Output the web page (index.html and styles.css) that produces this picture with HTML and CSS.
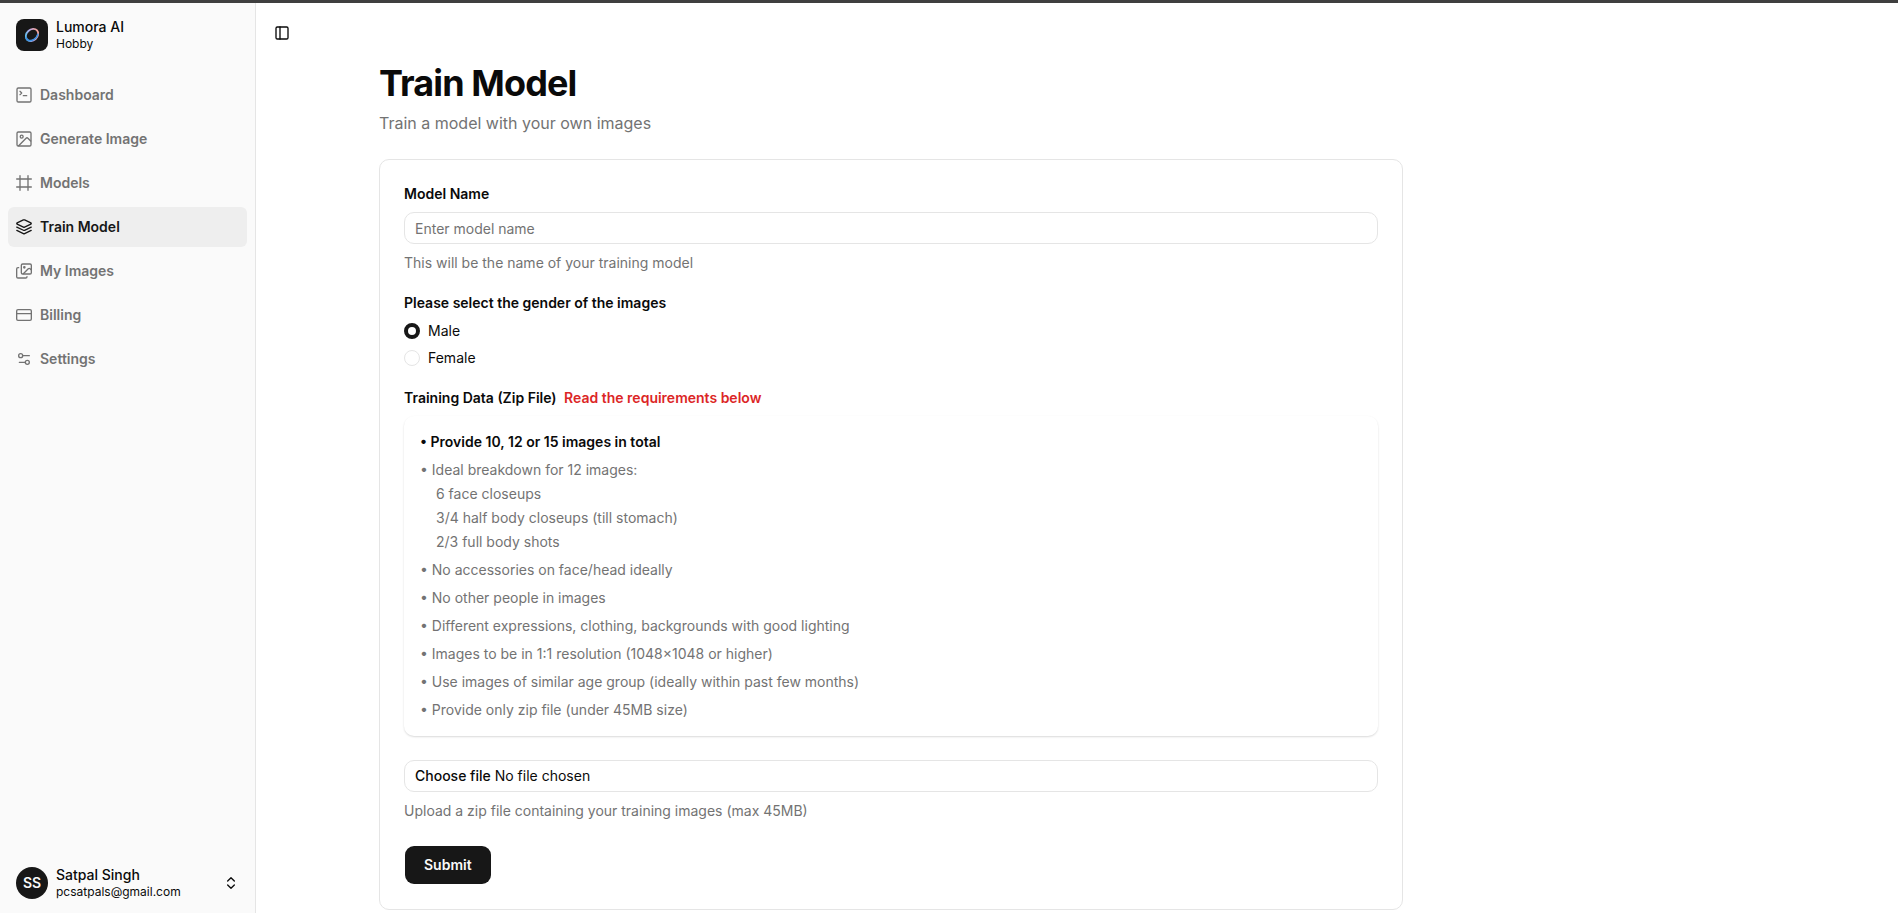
FILE: index.html
```html
<!DOCTYPE html>
<html lang="en">
<head>
    <meta charset="utf-8">
    <meta name="viewport" content="width=device-width, initial-scale=1">
    <title>Train Model - Lumora AI</title>
    <link rel="stylesheet" href="styles.css">
</head>
<body>
    <div class="layout">
        <aside class="sidebar">
            <div class="brand">
                <div class="brand-logo">
                    <svg width="16" height="16" viewBox="0 0 16 16" fill="none">
                        <defs>
                            <linearGradient id="ring" x1="2" y1="3" x2="14" y2="9" gradientUnits="userSpaceOnUse">
                                <stop offset="0" stop-color="#4fc3f0"/>
                                <stop offset="0.5" stop-color="#b9a8e8"/>
                                <stop offset="1" stop-color="#f2a39c"/>
                            </linearGradient>
                        </defs>
                        <ellipse cx="8" cy="8" rx="6.8" ry="5.4" transform="rotate(-42 8 8)" stroke="url(#ring)" stroke-width="1.8"/>
                        <path d="M2.200 10.500c.6 3.500 4.800 4 7.800 1.900 2-1.400 3.400-3.200 3.900-5.200" stroke="#3f8fe0" stroke-width="1.600" stroke-linecap="round"/>
                    </svg>
                </div>
                <div class="two-lines">
                    <span class="line-main">Lumora AI</span>
                    <span class="line-sub">Hobby</span>
                </div>
            </div>

            <nav class="menu">
                <a href="#" class="menu-item">
                    <svg class="icon" viewBox="0 0 24 24"><path d="m6 6.500 2.500 2.500L6 11.500"/><path d="M11 13h5"/><rect width="21" height="21" x="1.500" y="1.500" rx="2"/></svg>
                    <span>Dashboard</span>
                </a>
                <a href="#" class="menu-item">
                    <svg class="icon" viewBox="0 0 24 24"><rect width="21" height="21" x="1.500" y="1.500" rx="2"/><circle cx="8.500" cy="8.500" r="2.200"/><path d="m22 15-4.100-4.100a2 2 0 0 0-2.800 0L4 22"/></svg>
                    <span>Generate Image</span>
                </a>
                <a href="#" class="menu-item">
                    <svg class="icon" viewBox="0 0 24 24"><path d="M23 6H1"/><path d="M23 18H1"/><path d="M6 1v22"/><path d="M18 1v22"/></svg>
                    <span>Models</span>
                </a>
                <a href="#" class="menu-item active">
                    <svg class="icon" viewBox="0 0 24 24"><path d="M12.900 1.400a2.200 2.200 0 0 0-1.800 0L1.700 5.900a1 1 0 0 0 0 1.800l9.400 4.500a2.200 2.200 0 0 0 1.800 0l9.400-4.500a1 1 0 0 0 0-1.800z"/><path d="m1.200 12.200 9.900 4.700a2.200 2.200 0 0 0 1.800 0l9.900-4.700"/><path d="m1.200 17.200 9.900 4.700a2.200 2.200 0 0 0 1.800 0l9.900-4.700"/></svg>
                    <span>Train Model</span>
                </a>
                <a href="#" class="menu-item">
                    <svg class="icon" viewBox="0 0 24 24"><rect width="15" height="15" x="8" y="1.500" rx="2"/><circle cx="12.500" cy="6.500" r="1"/><path d="m22.500 10-1.300-1.300a2 2 0 0 0-2.800 0L11 16"/><path d="M4 7H3a2 2 0 0 0-2 2v11.500a2 2 0 0 0 2 2h11.500a2 2 0 0 0 2-2"/></svg>
                    <span>My Images</span>
                </a>
                <a href="#" class="menu-item">
                    <svg class="icon" viewBox="0 0 24 24"><rect width="22" height="16" x="1" y="4" rx="2"/><path d="M1 10h22"/></svg>
                    <span>Billing</span>
                </a>
                <a href="#" class="menu-item">
                    <svg class="icon" viewBox="0 0 24 24"><path d="M20 7h-9"/><path d="M14 17H5"/><circle cx="17" cy="17" r="3"/><circle cx="7" cy="7" r="3"/></svg>
                    <span>Settings</span>
                </a>
            </nav>

            <button type="button" class="user">
                <span class="avatar">SS</span>
                <span class="two-lines">
                    <span class="line-main">Satpal Singh</span>
                    <span class="line-sub">pcsatpals@gmail.com</span>
                </span>
                <svg class="icon" viewBox="0 0 24 24"><path d="m7 15 5 5 5-5"/><path d="m7 9 5-5 5 5"/></svg>
            </button>
        </aside>

        <main class="main">
            <header class="topbar">
                <button type="button" class="toggle" aria-label="Toggle Sidebar">
                    <svg class="icon" viewBox="0 0 24 24"><rect width="18" height="18" x="3" y="3" rx="2"/><path d="M9 3v18"/></svg>
                </button>
            </header>

            <div class="container">
                <h1>Train Model</h1>
                <p class="subtitle">Train a model with your own images</p>

                <form class="card">
                    <div class="field">
                        <label class="label" for="modelName">Model Name</label>
                        <input type="text" id="modelName" class="input" placeholder="Enter model name">
                        <p class="hint">This will be the name of your training model</p>
                    </div>

                    <fieldset class="field">
                        <legend class="label">Please select the gender of the images</legend>
                        <div class="radio-group">
                            <div class="radio-row">
                                <input type="radio" id="male" name="gender" value="male" checked>
                                <label for="male">Male</label>
                            </div>
                            <div class="radio-row">
                                <input type="radio" id="female" name="gender" value="female">
                                <label for="female">Female</label>
                            </div>
                        </div>
                    </fieldset>

                    <div class="field">
                        <label class="label" for="zipFile">Training Data (Zip File) <span class="warning">Read the requirements below</span></label>
                        <ul class="requirements">
                            <li class="strong">• Provide 10, 12 or 15 images in total</li>
                            <li>• Ideal breakdown for 12 images:
                                <ul>
                                    <li>6 face closeups</li>
                                    <li>3/4 half body closeups (till stomach)</li>
                                    <li>2/3 full body shots</li>
                                </ul>
                            </li>
                            <li>• No accessories on face/head ideally</li>
                            <li>• No other people in images</li>
                            <li>• Different expressions, clothing, backgrounds with good lighting</li>
                            <li>• Images to be in 1:1 resolution (1048×1048 or higher)</li>
                            <li>• Use images of similar age group (ideally within past few months)</li>
                            <li>• Provide only zip file (under 45MB size)</li>
                        </ul>
                        <div class="input file-box">
                            <span class="file-button">Choose file</span>
                            <span>No file chosen</span>
                            <input type="file" id="zipFile" accept=".zip">
                        </div>
                        <p class="hint">Upload a zip file containing your training images (max 45MB)</p>
                    </div>

                    <button type="submit" class="submit">Submit</button>
                </form>
            </div>
        </main>
    </div>
</body>
</html>
```
FILE: styles.css
```css
* {
    box-sizing: border-box;
}
body {
    margin: 0;
    border-top: 3px solid #3f3f3f;
    background: #fff;
    color: #0a0a0a;
    font-family: Inter, "Liberation Sans", sans-serif;
    font-size: 14px;
    line-height: 20px;
}
h1, p, ul {
    margin: 0;
    padding: 0;
}
ul {
    list-style: none;
}
button, input {
    font: inherit;
    color: inherit;
}
.layout {
    display: flex;
    min-height: calc(100vh - 3px);
}
.icon {
    width: 16px;
    height: 16px;
    flex-shrink: 0;
    fill: none;
    stroke: currentColor;
    stroke-width: 2;
    stroke-linecap: round;
    stroke-linejoin: round;
}

/* sidebar */
.sidebar {
    display: flex;
    flex-direction: column;
    width: 256px;
    flex-shrink: 0;
    padding: 8px 8px 6px;
    background: #fafafa;
    border-right: 1px solid #e5e5e5;
}
.brand,
.user {
    display: flex;
    align-items: center;
    gap: 8px;
    height: 48px;
    padding: 0 8px;
}
.user {
    margin-top: auto;
    border: none;
    background: none;
    text-align: left;
    cursor: pointer;
}
.brand-logo,
.avatar {
    display: flex;
    align-items: center;
    justify-content: center;
    width: 32px;
    height: 32px;
    background: #171717;
    color: #fafafa;
}
.brand-logo {
    border-radius: 8px;
}
.avatar {
    border-radius: 50%;
    font-weight: 600;
}
.two-lines {
    display: flex;
    flex-direction: column;
    flex: 1;
}
.line-main {
    line-height: 18px;
    font-weight: 500;
}
.line-sub {
    font-size: 12px;
    line-height: 16px;
}
.menu {
    display: flex;
    flex-direction: column;
    gap: 4px;
    padding-top: 16px;
}
.menu-item {
    display: flex;
    align-items: center;
    gap: 8px;
    height: 40px;
    padding: 0 8px;
    border-radius: 6px;
    color: #737373;
    font-weight: 600;
    text-decoration: none;
}
.menu-item:hover,
.menu-item.active {
    background: #eeeeee;
    color: #171717;
}

/* page */
.main {
    flex: 1;
    min-width: 0;
}
.topbar {
    display: flex;
    align-items: center;
    height: 60px;
    padding: 0 12px;
}
.toggle {
    display: flex;
    align-items: center;
    justify-content: center;
    width: 28px;
    height: 28px;
    padding: 0;
    border: none;
    background: none;
    cursor: pointer;
}
.container {
    max-width: 1396px;
    margin: 0 auto;
}
h1 {
    font-size: 36px;
    line-height: 40px;
    font-weight: 700;
    letter-spacing: -0.025em;
}
.subtitle {
    margin: 8px 0 24px;
    color: #737373;
    font-size: 16px;
    line-height: 24px;
}
.card {
    display: flex;
    flex-direction: column;
    gap: 20px;
    max-width: 1024px;
    padding: 24px;
    border: 1px solid #e5e5e5;
    border-radius: 10px;
}

/* form */
.field {
    min-width: 0;
    margin: 0;
    padding: 0;
    border: none;
}
.label {
    display: block;
    padding: 0;
    font-weight: 600;
}
.input {
    display: block;
    width: 100%;
    height: 32px;
    margin-top: 8px;
    padding: 0 10px;
    border: 1px solid #e5e5e5;
    border-radius: 10px;
    background: transparent;
}
.input::placeholder {
    color: #737373;
    opacity: 1;
}
.hint {
    margin-top: 9px;
    color: #737373;
}
.radio-group {
    display: flex;
    flex-direction: column;
    gap: 7px;
    padding-top: 8px;
}
.radio-row {
    display: flex;
    align-items: center;
    gap: 8px;
}
.radio-row input {
    appearance: none;
    width: 16px;
    height: 16px;
    margin: 0;
    border: 1px solid #e5e5e5;
    border-radius: 50%;
    background: #fff;
}
.radio-row input:checked {
    border: 4px solid #171717;
}
.warning {
    margin-left: 4px;
    color: #dc2626;
}
.requirements {
    display: flex;
    flex-direction: column;
    gap: 8px;
    margin: 8px 0 24px;
    padding: 16px;
    border-radius: 10px;
    color: #737373;
    box-shadow: 0 1px 2px rgba(0, 0, 0, 0.15);
}
.requirements .strong {
    color: #0a0a0a;
    font-weight: 600;
}
.requirements ul {
    display: flex;
    flex-direction: column;
    gap: 4px;
    margin-top: 4px;
    padding-left: 16px;
}
.file-box {
    display: flex;
    align-items: center;
    gap: 4px;
    position: relative;
}
.file-button {
    font-weight: 500;
}
/* the real file input covers the whole box */
.file-box input {
    position: absolute;
    inset: 0;
    width: 100%;
    opacity: 0;
    cursor: pointer;
}
.submit {
    align-self: flex-start;
    height: 40px;
    margin-top: 4px;
    padding: 0 19px;
    border: 1px solid transparent;
    border-radius: 10px;
    background: #171717;
    background-clip: padding-box;
    color: #fafafa;
    font-weight: 600;
    cursor: pointer;
}
```
